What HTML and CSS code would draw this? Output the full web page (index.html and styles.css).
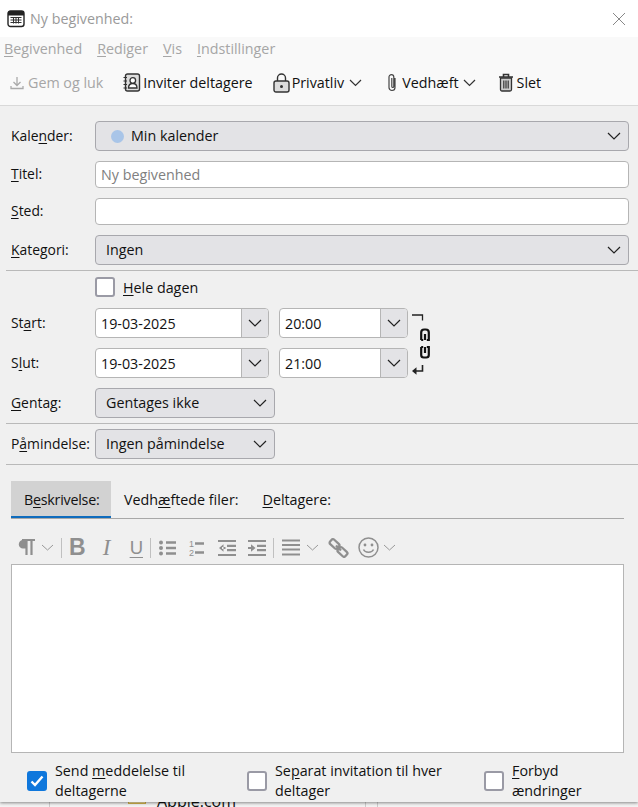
FILE: index.html
```html
<!DOCTYPE html>
<html lang="da">
<head>
  <meta charset="UTF-8">
  <meta name="viewport" content="width=device-width, initial-scale=1.0">
  <title>Ny begivenhed</title>
  <link rel="stylesheet" href="styles.css">
</head>
<body>

  <div class="window">
    <div class="titlebar">
      <svg class="app-icon" width="18" height="18" viewBox="0 0 18 18">
        <rect x="1" y="1" width="16" height="15.5" rx="2.5" fill="#fff" stroke="#222" stroke-width="1.4"/>
        <path d="M1 2.5a1.5 1.5 0 0 1 1.5-1.5h13a1.5 1.5 0 0 1 1.5 1.5V5.5H1z" fill="#222"/>
        <path d="M3.5 7.500h11M3.500 10h11M3.500 12.500h11M6.500 7v6.500M9 7v6.500M11.500 7v6.500" stroke="#333" stroke-width="1" fill="none"/>
      </svg>
      <span class="title-text">Ny begivenhed:</span>
      <svg class="close-icon" width="14" height="14" viewBox="0 0 14 14">
        <path d="M1 1l12 12M13 1L1 13" stroke="#888" stroke-width="1" fill="none"/>
      </svg>
    </div>

    <div class="menubar">
      <span><u>B</u>egivenhed</span>
      <span><u>R</u>ediger</span>
      <span><u>V</u>is</span>
      <span><u>I</u>ndstillinger</span>
    </div>

    <div class="toolbar">
      <div class="tool disabled save-tool">
        <svg width="14" height="14" viewBox="0 0 14 14">
          <path d="M7 1v8M3.500 6L7 9.500 10.500 6M1 10v2.500h12V10" stroke="#aaa" stroke-width="1.300" fill="none"/>
        </svg>
        <span>Gem og luk</span>
      </div>
      <div class="tool invite-tool">
        <svg width="18" height="19" viewBox="0 0 18 19">
          <rect x="2.500" y="1" width="14" height="17" rx="2" fill="#ddd" stroke="#333" stroke-width="1.400"/>
          <path d="M.5 4.500h3.500M.5 8h3.500M.5 11.500h3.500M.5 15h3.500" stroke="#333" stroke-width="1.200"/>
          <circle cx="9.800" cy="7.500" r="2.800" fill="#fff" stroke="#333" stroke-width="1.300"/>
          <path d="M5.500 15c0-3 2-4.500 4.300-4.500s4.200 1.500 4.200 4.500z" fill="#fff" stroke="#333" stroke-width="1.300"/>
        </svg>
        <span>Inviter deltagere</span>
      </div>
      <div class="tool privacy-tool">
        <svg width="17" height="20" viewBox="0 0 17 20">
          <path d="M4.500 8V5a4 4 0 0 1 8 0v3" fill="none" stroke="#333" stroke-width="1.400"/>
          <rect x="1" y="8" width="15" height="11" rx="2" fill="#ddd" stroke="#333" stroke-width="1.400"/>
          <circle cx="8.500" cy="13.500" r="1.500" fill="#333"/>
        </svg>
        <span>Privatliv</span>
        <svg class="tool-arrow" width="13" height="8" viewBox="0 0 13 8"><path d="M1 1l5.500 5.500L12 1" stroke="#333" stroke-width="1.200" fill="none"/></svg>
      </div>
      <div class="tool attach-tool">
        <svg width="12" height="19" viewBox="0 0 12 19">
          <path d="M9 5v9.500a3 3 0 0 1-6 0V4a2.400 2.400 0 0 1 4.800 0v9.500a1 1 0 0 1-2 0V5" fill="none" stroke="#444" stroke-width="1.200"/>
        </svg>
        <span>Vedhæft</span>
        <svg class="tool-arrow" width="13" height="8" viewBox="0 0 13 8"><path d="M1 1l5.500 5.500L12 1" stroke="#333" stroke-width="1.200" fill="none"/></svg>
      </div>
      <div class="tool delete-tool">
        <svg width="16" height="19" viewBox="0 0 16 19">
          <path d="M1 4h14M5.500 3.500V1.500h5v2" fill="none" stroke="#333" stroke-width="1.600"/>
          <path d="M2.500 5h11v11.500a1.500 1.500 0 0 1-1.500 1.500H4a1.500 1.500 0 0 1-1.500-1.500z" fill="#ccc" stroke="#333" stroke-width="1.300"/>
          <path d="M5.800 7.500v8M8 7.500v8M10.200 7.500v8" stroke="#333" stroke-width="1.200"/>
        </svg>
        <span>Slet</span>
      </div>
    </div>

    <div class="form">
      <div class="row row-select">
        <label>Kale<u>n</u>der:</label>
        <div class="select wide cal-select">
          <span class="cal-dot"></span>
          <span class="select-text">Min kalender</span>
          <svg class="chevron" width="14" height="8" viewBox="0 0 14 8"><path d="M1 1l6 6 6-6" stroke="#222" stroke-width="1.200" fill="none"/></svg>
        </div>
      </div>
      <div class="row row-input">
        <label><u>T</u>itel:</label>
        <div class="input wide placeholder">Ny begivenhed</div>
      </div>
      <div class="row row-input">
        <label><u>S</u>ted:</label>
        <div class="input wide"></div>
      </div>
      <div class="row row-select">
        <label><u>K</u>ategori:</label>
        <div class="select wide">
          <span class="select-text">Ingen</span>
          <svg class="chevron" width="14" height="8" viewBox="0 0 14 8"><path d="M1 1l6 6 6-6" stroke="#222" stroke-width="1.200" fill="none"/></svg>
        </div>
      </div>

      <hr class="divider first-divider">

      <div class="row allday-row">
        <label></label>
        <span class="checkbox"></span>
        <span class="allday-text"><u>H</u>ele dagen</span>
      </div>

      <div class="dates">
        <div class="date-rows">
          <div class="row row-date">
            <label>St<u>a</u>rt:</label>
            <div class="combo date-combo">
              <span class="combo-text">19-03-2025</span>
              <span class="combo-btn"><svg width="14" height="8" viewBox="0 0 14 8"><path d="M1 1l6 6 6-6" stroke="#222" stroke-width="1.200" fill="none"/></svg></span>
            </div>
            <div class="combo time-combo">
              <span class="combo-text">20:00</span>
              <span class="combo-btn"><svg width="14" height="8" viewBox="0 0 14 8"><path d="M1 1l6 6 6-6" stroke="#222" stroke-width="1.200" fill="none"/></svg></span>
            </div>
          </div>
          <div class="row row-date">
            <label>S<u>l</u>ut:</label>
            <div class="combo date-combo">
              <span class="combo-text">19-03-2025</span>
              <span class="combo-btn"><svg width="14" height="8" viewBox="0 0 14 8"><path d="M1 1l6 6 6-6" stroke="#222" stroke-width="1.200" fill="none"/></svg></span>
            </div>
            <div class="combo time-combo">
              <span class="combo-text">21:00</span>
              <span class="combo-btn"><svg width="14" height="8" viewBox="0 0 14 8"><path d="M1 1l6 6 6-6" stroke="#222" stroke-width="1.200" fill="none"/></svg></span>
            </div>
          </div>
        </div>
        <svg class="link-icon" width="20" height="62" viewBox="0 0 20 62">
          <path d="M1 1h10.500v5.500" fill="none" stroke="#222" stroke-width="1.300"/>
          <path d="M10.200 26v-7.500a3 3 0 0 1 3-3h1.600a3 3 0 0 1 3 3V26h-2M10.200 26h2M14 20v6" fill="none" stroke="#111" stroke-width="2.200"/>
          <path d="M10.200 33v8a2.500 2.500 0 0 0 2.500 2.500h2.600a2.500 2.500 0 0 0 2.500-2.500v-8h-2M10.200 33h2M14 33v6" fill="none" stroke="#111" stroke-width="2.200"/>
          <path d="M11.500 51v6H4" fill="none" stroke="#222" stroke-width="1.600"/>
          <path d="M1 57l4.500-3.800v7.600z" fill="#222"/>
        </svg>
      </div>

      <div class="row row-repeat">
        <label><u>G</u>entag:</label>
        <div class="select short">
          <span class="select-text">Gentages ikke</span>
          <svg class="chevron" width="14" height="8" viewBox="0 0 14 8"><path d="M1 1l6 6 6-6" stroke="#222" stroke-width="1.200" fill="none"/></svg>
        </div>
      </div>

      <hr class="divider">

      <div class="row row-reminder">
        <label>P<u>å</u>mindelse:</label>
        <div class="select short">
          <span class="select-text">Ingen påmindelse</span>
          <svg class="chevron" width="14" height="8" viewBox="0 0 14 8"><path d="M1 1l6 6 6-6" stroke="#222" stroke-width="1.200" fill="none"/></svg>
        </div>
      </div>

      <hr class="divider">
    </div>

    <div class="tabs">
      <div class="tab active">B<u>e</u>skrivelse:</div>
      <div class="tab">Vedh<u>æ</u>ftede filer:</div>
      <div class="tab"><u>D</u>eltagere:</div>
    </div>

    <div class="editor-tools">
      <svg class="ed-para" width="17" height="17" viewBox="0 0 17 17"><path d="M8 1H5a4.200 4.200 0 0 0 0 8.500h3z" fill="#8f8f8f"/><path d="M4 1h13M8.500 1v15M13.500 1v15" stroke="#8f8f8f" stroke-width="2.200" fill="none"/></svg>
      <svg class="ed-arrow" width="13" height="7" viewBox="0 0 13 7"><path d="M1 1l5.500 5L12 1" stroke="#999" stroke-width="1" fill="none"/></svg>
      <span class="ed-sep sep-text"></span>
      <span class="ed-bold">B</span>
      <span class="ed-italic">I</span>
      <span class="ed-under">U</span>
      <span class="ed-sep sep-list"></span>
      <svg class="ed-icon ed-bullets" width="17" height="16" viewBox="0 0 17 16"><path d="M7 2.500h10M7 8h10M7 13.500h10" stroke="#8f8f8f" stroke-width="2.400"/><circle cx="2" cy="2.500" r="2" fill="#8f8f8f"/><circle cx="2" cy="8" r="2" fill="#8f8f8f"/><circle cx="2" cy="13.500" r="2" fill="#8f8f8f"/></svg>
      <svg class="ed-icon ed-numbers" width="15" height="18" viewBox="0 0 15 18"><text x="0" y="7.500" class="ed-num">1</text><text x="0" y="17" class="ed-num">2</text><path d="M6 4.500h9M6 13.500h9" stroke="#8f8f8f" stroke-width="2.400"/></svg>
      <svg class="ed-icon ed-outdent" width="18" height="16" viewBox="0 0 18 16"><path d="M0 1h18M9 5.800h9M9 10.200h9M0 15h18" stroke="#8f8f8f" stroke-width="2.200"/><path d="M5.500 4.300L1 8l4.500 3.700zM4 7h3.500v2H4z" fill="#8f8f8f"/></svg>
      <svg class="ed-icon ed-indent" width="18" height="16" viewBox="0 0 18 16"><path d="M0 1h18M9 5.800h9M9 10.200h9M0 15h18M0 8h4" stroke="#8f8f8f" stroke-width="2.200"/><path d="M3 4.300L7.500 8 3 11.700z" fill="#8f8f8f"/></svg>
      <span class="ed-sep sep-align"></span>
      <svg class="ed-icon ed-align" width="18" height="17" viewBox="0 0 18 17"><path d="M0 1.500h18M0 6h18M0 10.500h18M0 15.500h18" stroke="#8f8f8f" stroke-width="2.200"/></svg>
      <svg class="ed-arrow" width="13" height="7" viewBox="0 0 13 7"><path d="M1 1l5.500 5L12 1" stroke="#999" stroke-width="1" fill="none"/></svg>
      <svg class="ed-link" width="21" height="20" viewBox="0 0 21 20">
        <rect x="1.500" y="3" width="10" height="6" rx="2" transform="rotate(42 6.500 6)" fill="none" stroke="#8f8f8f" stroke-width="2.300"/>
        <rect x="9.500" y="11" width="10" height="6" rx="2" transform="rotate(42 14.500 14)" fill="none" stroke="#8f8f8f" stroke-width="2.300"/>
        <path d="M8 7.500l5 5" stroke="#8f8f8f" stroke-width="2.300"/>
      </svg>
      <svg class="ed-smile" width="21" height="21" viewBox="0 0 21 21"><circle cx="10.500" cy="10.500" r="9.500" fill="none" stroke="#8f8f8f" stroke-width="1.500"/><circle cx="7" cy="8" r="1.400" fill="#8f8f8f"/><circle cx="14" cy="8" r="1.400" fill="#8f8f8f"/><path d="M5.500 12.500c1.500 3.500 8.500 3.500 10 0" fill="none" stroke="#8f8f8f" stroke-width="1.500"/></svg>
      <svg class="ed-arrow ed-arrow-last" width="13" height="7" viewBox="0 0 13 7"><path d="M1 1l5.500 5L12 1" stroke="#999" stroke-width="1" fill="none"/></svg>
    </div>

    <div class="editor"></div>

    <div class="options">
      <div class="option opt-send">
        <span class="checkbox checked">
          <svg width="14" height="12" viewBox="0 0 14 12"><path d="M1.500 6.500L5 10l7.500-8.500" stroke="#fff" stroke-width="2.400" fill="none"/></svg>
        </span>
        <span>Send <u>m</u>eddelelse til deltagerne</span>
      </div>
      <div class="option opt-separate">
        <span class="checkbox"></span>
        <span>Se<u>p</u>arat invitation til hver deltager</span>
      </div>
      <div class="option opt-forbid">
        <span class="checkbox"></span>
        <span><u>F</u>orbyd ændringer</span>
      </div>
    </div>
  </div>

  <div class="behind">
    <div class="behind-left"></div>
    <div class="behind-main">
      <span class="folder"></span>
      <span class="behind-text">Apple.com</span>
    </div>
    <div class="behind-col"></div>
  </div>

</body>
</html>
```

FILE: styles.css
```css
html, body {
  margin: 0;
  padding: 0;
  height: 807px;
  overflow: hidden;
}
body {
  font-family: "Open Sans", "Noto Sans", sans-serif;
  font-size: 14.3px;
  color: #111;
  background-color: #e8e8e8;
}
label {
  display: block;
  flex: none;
  width: 84px;
  margin-left: 11px;
  padding-bottom: 2px;
  font-size: 13.9px;
}
u {
  text-underline-offset: 2px;
}
.window {
  position: relative;
  z-index: 1;
  height: 802px;
  background-color: #f0f0f0;
  box-shadow: 0 1px 3px rgba(0, 0, 0, 0.45);
  overflow: hidden;
}

/* title, menu, toolbar */
.titlebar {
  display: flex;
  align-items: center;
  height: 37px;
  background-color: #ffffff;
  padding-left: 7px;
}
.title-text {
  margin-left: 5px;
  color: #9a9a9a;
}
.close-icon {
  margin-left: auto;
  margin-right: 12px;
}
.menubar {
  display: flex;
  align-items: center;
  gap: 15px;
  box-sizing: border-box;
  height: 26px;
  padding: 0 0 4px 4px;
  background-color: #f9f9f9;
  color: #a6a6a6;
}
.toolbar {
  display: flex;
  align-items: center;
  box-sizing: content-box;
  height: 42px;
  background-color: #f9f9f9;
  border-bottom: 1px solid #d9d9d9;
}
.tool {
  display: flex;
  align-items: center;
  gap: 2px;
  padding-bottom: 3px;
}
.tool.disabled {
  color: #a6a6a6;
}
.tool-arrow {
  margin-left: 3px;
}
.save-tool {
  margin-left: 10px;
  gap: 4px;
}
.invite-tool,
.privacy-tool {
  margin-left: 20px;
}
.attach-tool {
  margin-left: 24px;
  gap: 4px;
}
.attach-tool .tool-arrow {
  margin-left: 0;
}
.delete-tool {
  margin-left: 22px;
  gap: 3px;
}

/* form */
.form {
  padding-top: 15px;
}
.row {
  display: flex;
  align-items: center;
}
.select {
  display: flex;
  align-items: center;
  box-sizing: border-box;
  height: 30px;
  padding-left: 10px;
  background-color: #e3e3e6;
  border: 1px solid #a8a8ad;
  border-radius: 4px;
}
.select-text {
  padding-bottom: 2px;
}
.cal-select {
  padding-left: 15px;
}
.wide {
  width: 534px;
}
.short {
  width: 180px;
}
.chevron {
  margin-left: auto;
  margin-right: 7px;
}
.cal-dot {
  width: 13px;
  height: 13px;
  margin-right: 7px;
  border-radius: 50%;
  background-color: #a9c5e8;
}
.row-select,
.row-input {
  margin-bottom: 10px;
}
.input {
  box-sizing: border-box;
  height: 27px;
  line-height: 25px;
  padding-left: 5px;
  background-color: #ffffff;
  border: 1px solid #b5b5b5;
  border-radius: 4px;
}
.placeholder {
  color: #808080;
}
.divider {
  margin: 0 0 0 6px;
  border: none;
  border-top: 1px solid #b9b9b9;
  width: 632px;
}
.first-divider {
  margin-top: -5px;
}
.allday-row {
  margin-top: 6px;
  height: 20px;
}
.checkbox {
  display: flex;
  align-items: center;
  justify-content: center;
  flex: none;
  box-sizing: border-box;
  width: 20px;
  height: 20px;
  background-color: #ffffff;
  border: 2px solid #9a9aa5;
  border-radius: 3px;
}
.checkbox.checked {
  background-color: #0f77dc;
  border-color: #0f77dc;
}
.allday-text {
  margin-left: 8px;
}
.dates {
  display: flex;
  margin-top: 11px;
}
.row-date {
  height: 30px;
  margin-bottom: 10px;
}
.combo {
  display: flex;
  box-sizing: border-box;
  height: 30px;
  background-color: #ffffff;
  border: 1px solid #b5b5b5;
  border-radius: 4px;
  overflow: hidden;
}
.date-combo {
  width: 174px;
}
.time-combo {
  width: 129px;
  margin-left: 10px;
}
.combo-text {
  flex: 1;
  line-height: 29px;
  padding-left: 5px;
}
.combo-btn {
  display: flex;
  align-items: center;
  justify-content: center;
  width: 26px;
  background-color: #e3e3e6;
  border-left: 1px solid #b5b5b5;
}
.link-icon {
  margin: 6px 0 0 3px;
}
.row-repeat {
  margin-bottom: 5px;
}
.row-reminder {
  margin: 5px 0;
}

/* tabs */
.tabs {
  display: flex;
  height: 37px;
  margin: 16px 14px 0 11px;
  border-bottom: 1px solid #a8a8a8;
}
.tab {
  line-height: 38px;
  padding: 0 13px;
}
.tab:last-child {
  padding-left: 11px;
}
.tab.active {
  box-sizing: border-box;
  width: 100px;
  height: 37px;
  padding-right: 0;
  letter-spacing: -0.25px;
  background-color: #d2d2d2;
  border-bottom: 2px solid #0f6cbd;
}

/* editor */
.editor-tools {
  display: flex;
  align-items: center;
  box-sizing: border-box;
  height: 46px;
  padding: 11px 0 0 18px;
  color: #8f8f8f;
}
.ed-arrow {
  margin-left: 6px;
}
.ed-arrow-last {
  margin-left: 4px;
}
.ed-sep {
  width: 1px;
  height: 20px;
  background-color: #c0c0c0;
}
.sep-text {
  margin-left: 7px;
}
.ed-bold {
  margin-left: 7px;
  font: bold 23px "Liberation Sans", sans-serif;
}
.ed-italic {
  width: 12px;
  margin-left: 15px;
  text-align: center;
  font: italic 23px "Liberation Serif", serif;
}
.ed-under {
  margin-left: 17px;
  font: 18.500px "Liberation Sans", sans-serif;
  text-decoration: underline;
  text-underline-offset: 3px;
}
.sep-list {
  margin-left: 7px;
}
.sep-align {
  margin-left: 7px;
}
.ed-num {
  font: 9px "Liberation Sans", sans-serif;
  fill: #8f8f8f;
}
.ed-bullets,
.ed-align {
  margin-left: 8px;
}
.ed-numbers {
  margin-left: 13px;
}
.ed-outdent {
  margin-left: 14px;
}
.ed-indent {
  margin-left: 12px;
}
.ed-link {
  margin-left: 9px;
}
.ed-smile {
  margin-left: 9px;
}
.editor {
  box-sizing: border-box;
  width: 613px;
  height: 189px;
  margin-left: 11px;
  margin-top: -1px;
  background-color: #ffffff;
  border: 1px solid #b5b5b5;
}
.options {
  display: flex;
  margin-top: 8px;
  line-height: 20px;
}
.option {
  display: flex;
  align-items: center;
  gap: 8px;
}
.opt-send {
  width: 220px;
  margin-left: 27px;
}
.opt-separate {
  width: 237px;
}
.opt-forbid {
  width: 110px;
}

/* whatever lies behind the dialog */
.behind {
  display: flex;
  height: 5px;
  overflow: hidden;
  background-color: #f3f3f3;
}
.behind-left {
  box-sizing: border-box;
  width: 50px;
  border-right: 1px solid #cccccc;
}
.behind-main {
  display: flex;
  box-sizing: border-box;
  width: 316px;
  margin-top: -12px;
  padding-left: 78px;
  border-right: 1px solid #cccccc;
}
.folder {
  width: 16px;
  height: 12px;
  border: 1px solid #d8b64c;
  background-color: #f6e3a0;
}
.behind-text {
  margin-left: 11px;
  font-size: 16px;
}
.behind-col {
  box-sizing: border-box;
  width: 12px;
  border-right: 1px solid #cccccc;
}
```
